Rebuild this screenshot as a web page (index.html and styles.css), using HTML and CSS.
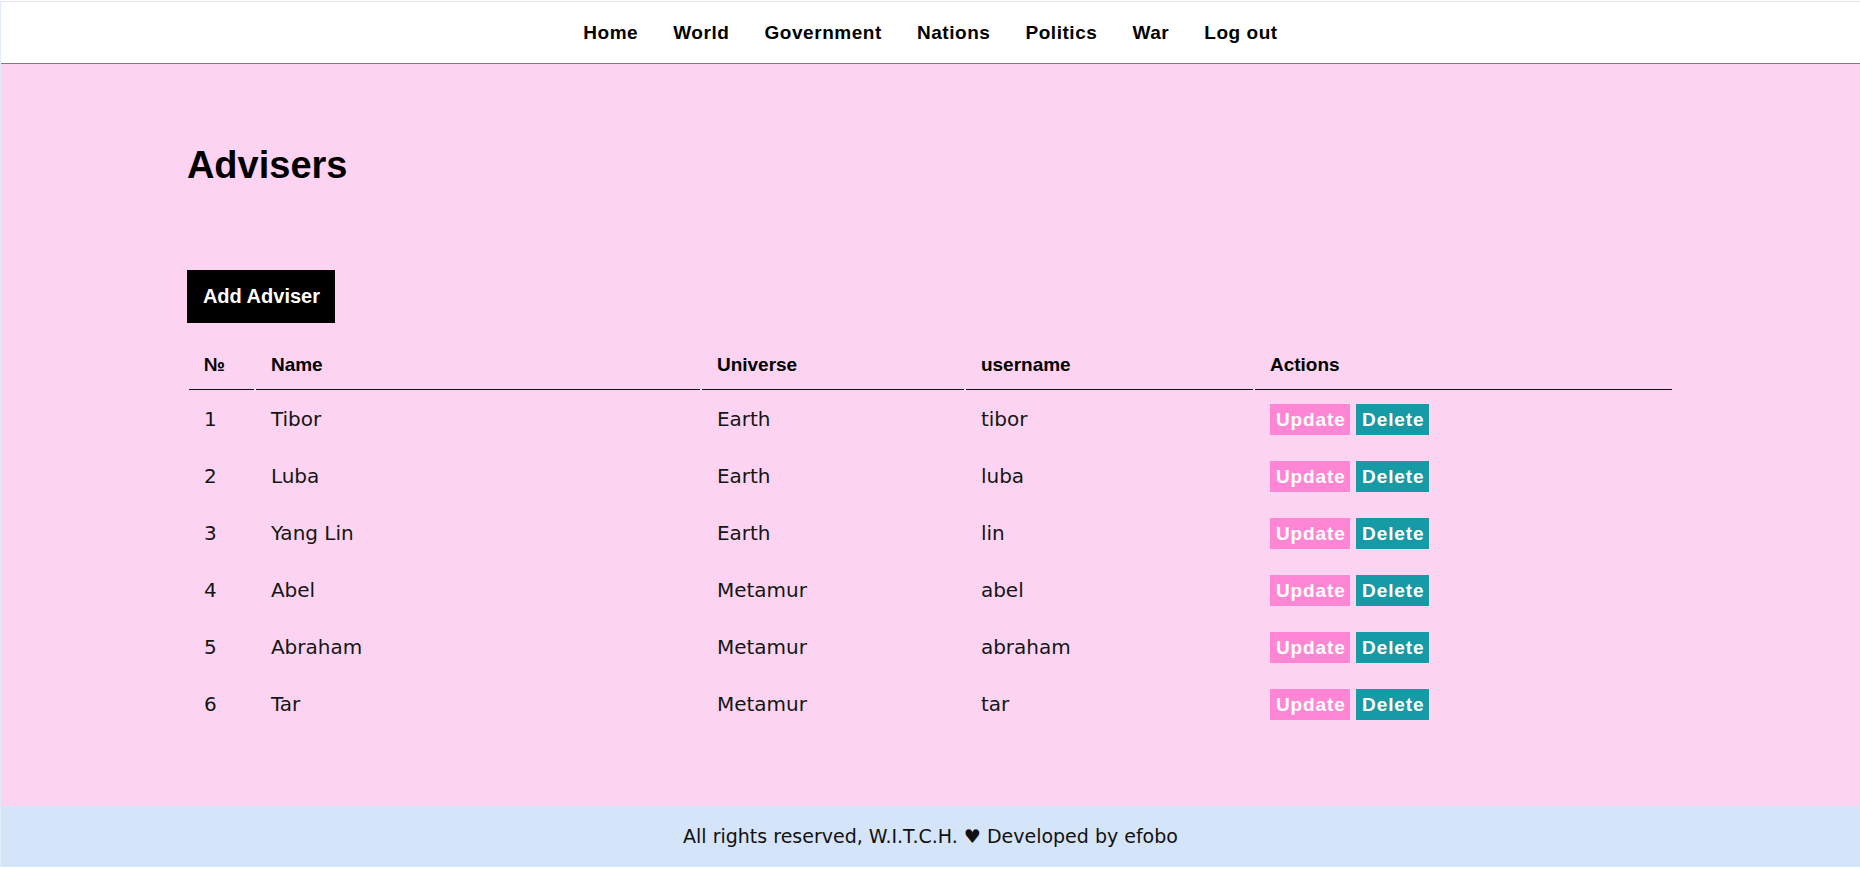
FILE: index.html
```html
<!DOCTYPE html>
<html lang="en">
<head>
<meta charset="utf-8">
<title>Advisers</title>
<link rel="stylesheet" href="styles.css">
</head>
<body>
<div class="page">
  <nav class="nav">
    <a class="nav-link" href="#">Home</a>
    <a class="nav-link" href="#">World</a>
    <a class="nav-link" href="#">Government</a>
    <a class="nav-link" href="#">Nations</a>
    <a class="nav-link" href="#">Politics</a>
    <a class="nav-link" href="#">War</a>
    <a class="nav-link" href="#">Log out</a>
  </nav>
  <main class="main">
    <div class="container">
      <h1 class="title">Advisers</h1>
      <button class="add-btn" type="button">Add Adviser</button>
      <table class="table">
        <thead>
          <tr>
            <th class="c-num">№</th>
            <th class="c-name">Name</th>
            <th class="c-uni">Universe</th>
            <th class="c-user">username</th>
            <th class="c-act">Actions</th>
          </tr>
        </thead>
        <tbody>
          <tr><td>1</td><td>Tibor</td><td>Earth</td><td>tibor</td><td><span class="btn btn-update">Update</span> <span class="btn btn-delete">Delete</span></td></tr>
          <tr><td>2</td><td>Luba</td><td>Earth</td><td>luba</td><td><span class="btn btn-update">Update</span> <span class="btn btn-delete">Delete</span></td></tr>
          <tr><td>3</td><td>Yang Lin</td><td>Earth</td><td>lin</td><td><span class="btn btn-update">Update</span> <span class="btn btn-delete">Delete</span></td></tr>
          <tr><td>4</td><td>Abel</td><td>Metamur</td><td>abel</td><td><span class="btn btn-update">Update</span> <span class="btn btn-delete">Delete</span></td></tr>
          <tr><td>5</td><td>Abraham</td><td>Metamur</td><td>abraham</td><td><span class="btn btn-update">Update</span> <span class="btn btn-delete">Delete</span></td></tr>
          <tr><td>6</td><td>Tar</td><td>Metamur</td><td>tar</td><td><span class="btn btn-update">Update</span> <span class="btn btn-delete">Delete</span></td></tr>
        </tbody>
      </table>
    </div>
  </main>
  <footer class="footer">All rights reserved, W.I.T.C.H. ♥ Developed by efobo</footer>
</div>
</body>
</html>
```
FILE: styles.css
```css
html {
  background: #ffffff;
}
body {
  margin: 0;
  padding-top: 1px;
  font-family: "DejaVu Sans", sans-serif;
  color: #111;
}
.page {
  border-left: 1px solid #e2ecf9;
}
.nav {
  height: 61px;
  border-top: 1px solid #e3e3e3;
  border-bottom: 1px solid #7d7d7d;
  background: #ffffff;
  display: flex;
  justify-content: center;
  align-items: center;
  gap: 35px;
}
.nav-link {
  font-family: "Liberation Sans", Arial, sans-serif;
  font-weight: 700;
  font-size: 19px;
  letter-spacing: 0.55px;
  color: #000;
  text-decoration: none;
}
.main {
  background: #fcd4f2;
  padding: 80px 0 72px;
}
.container {
  width: 80%;
  margin: 0 auto;
}
.title {
  margin: 0 0 83px;
  font-family: "Liberation Sans", Arial, sans-serif;
  font-weight: 700;
  font-size: 38px;
  line-height: normal;
  color: #000;
}
.add-btn {
  display: block;
  border: 0;
  margin: 0;
  background: #000;
  color: #fff;
  font-family: "Liberation Sans", Arial, sans-serif;
  font-weight: 700;
  font-size: 20px;
  line-height: 23px;
  padding: 15px 15px 15px 16px;
}
.table {
  margin-top: 16px;
  width: 100%;
  border-spacing: 2px;
  table-layout: fixed;
}
.table th {
  text-align: left;
  font-family: "Liberation Sans", Arial, sans-serif;
  font-weight: 700;
  font-size: 19px;
  line-height: 23px;
  padding: 12px 15px 13px;
  border-bottom: 1px solid #111;
  color: #000;
}
.c-num { width: 35px; }
.c-name { width: 414px; }
.c-uni { width: 232px; }
.c-user { width: 257px; }
.c-act { width: auto; }
.table td {
  font-size: 20px;
  line-height: 23px;
  padding: 12px 15px;
  vertical-align: middle;
  color: #151515;
}
.btn {
  display: inline-block;
  font-family: "Liberation Sans", Arial, sans-serif;
  font-weight: 700;
  font-size: 19px;
  letter-spacing: 0.9px;
  line-height: 31px;
  height: 31px;
  padding: 0 4px 0 6px;
  color: #fff;
  vertical-align: middle;
}
.btn-update {
  background: #ff86d4;
}
.btn-delete {
  background: #169aa5;
}
.footer {
  background: #d4e4f9;
  height: 61px;
  line-height: 61px;
  text-align: center;
  font-size: 19px;
  color: #111;
}
```
